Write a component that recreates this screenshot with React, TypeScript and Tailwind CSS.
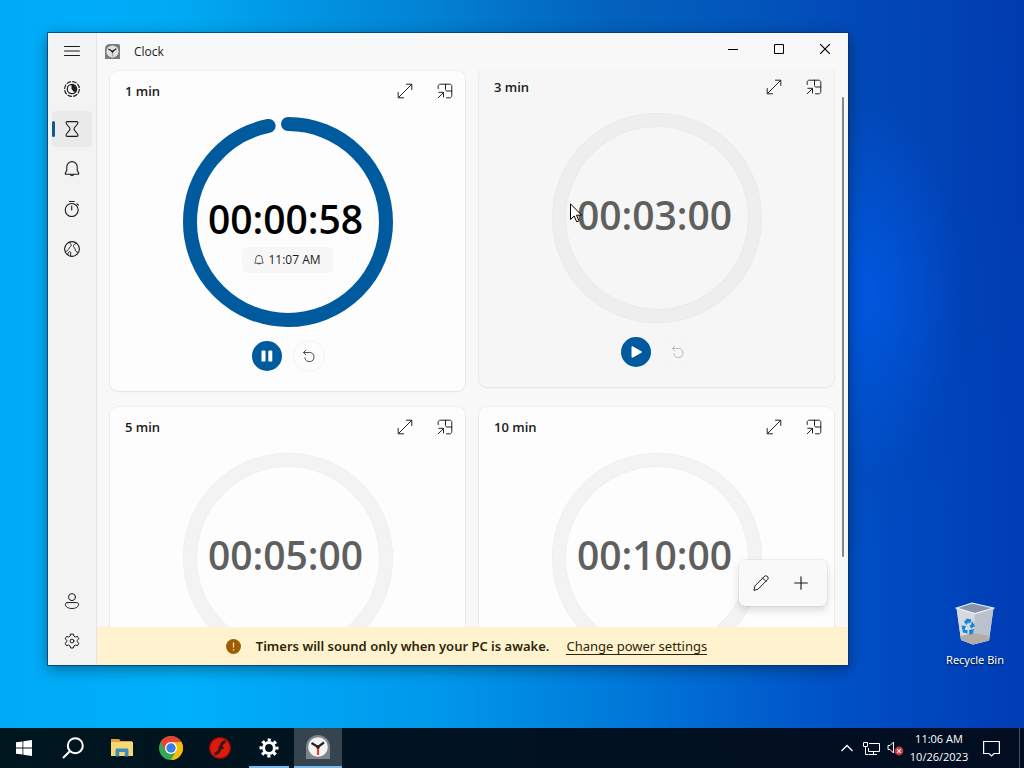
import React from 'react';

interface Timer {
  name: string;
  time: string;
  // fraction of the ring that is still filled, 0 when the timer is idle
  progress: number;
  endsAt?: string;
  hovered?: boolean;
}

const timers: Timer[] = [
  { name: '1 min', time: '00:00:58', progress: 58 / 60, endsAt: '11:07 AM' },
  { name: '3 min', time: '00:03:00', progress: 0, hovered: true },
  { name: '5 min', time: '00:05:00', progress: 0 },
  { name: '10 min', time: '00:10:00', progress: 0 },
];

const RADIUS = 98;
const CIRCUMFERENCE = 2 * Math.PI * RADIUS;

interface IconProps {
  size?: number;
  className?: string;
  children: React.ReactNode;
}

const Icon: React.FC<IconProps> = ({ size = 16, className = '', children }) => (
  <svg
    width={size}
    height={size}
    viewBox="0 0 16 16"
    fill="none"
    stroke="currentColor"
    strokeWidth="1"
    strokeLinecap="round"
    strokeLinejoin="round"
    className={className}
    aria-hidden="true"
  >
    {children}
  </svg>
);

const MenuIcon = () => (
  <Icon>
    <path d="M.5 3.5h15M.5 8h15M.5 12.5h15" />
  </Icon>
);

const FocusIcon = () => (
  <Icon>
    <circle cx="8" cy="8" r="7.4" strokeDasharray="4.6 1.2" strokeWidth="1.2" strokeLinecap="butt" />
    <circle cx="8" cy="8" r="4.7" strokeWidth="1.2" />
    <path d="M8 4v4l2.500 3.100A4 4 0 0 0 8 4z" fill="currentColor" />
  </Icon>
);

const HourglassIcon = () => (
  <Icon>
    <path
      d="M3.2.6h9.600c.8 0 1.200.4 1.100 1.200-.3 3-3.900 3.700-3.900 6.200s3.600 3.200 3.900 6.200c.1.800-.3 1.200-1.100 1.200H3.200c-.8 0-1.200-.4-1.100-1.200C2.400 11.200 6 10.500 6 8S2.400 4.800 2.100 1.800C2 1 2.400.600 3.200.600z"
      strokeWidth="1.1"
    />
  </Icon>
);

const BellIcon = ({ size = 16 }: { size?: number }) => (
  <Icon size={size}>
    <path
      d="M8 .6a5.2 5.2 0 0 0-5.2 5.100v3.500L1.300 12.300c-.2.500 0 .9.500.9h12.400c.5 0 .7-.4.5-.9l-1.500-3.100V5.700A5.200 5.200 0 0 0 8 .6zM6.300 13.400a1.750 1.750 0 0 0 3.400 0"
      strokeWidth="1.1"
    />
  </Icon>
);

const StopwatchIcon = () => (
  <Icon>
    <circle cx="7.700" cy="9" r="6.500" strokeWidth="1.1" />
    <path d="M5.500.5h4.600M7.700 5v4M13 2.800l1.400 1.400" strokeWidth="1.1" />
  </Icon>
);

const WorldIcon = () => (
  <Icon>
    <circle cx="8" cy="8" r="7.400" strokeWidth="1.1" />
    <path d="M5.600 1.300c-.3 1.500 1.900 1.600 1.800 2.900-.1 1.200-1.700 1.300-1.900 2.500-.2 1.300-1.200 1.600-1.900 2.400-.5.700-1.100 1.300-2 1.500M12.200 2.300c-.8.900-2.400.9-2.700 2.200-.3 1.300.5 1.800 1.200 2.700.7.900.3 2.200 1.200 3.200.6.700 1.400.9 2 .9M3.700 13.700c.2-1.200.5-2.500 1.700-2.900 1.300-.4 1.500 1 1.300 2.300l-.2 1.900" />
  </Icon>
);

const PersonIcon = () => (
  <Icon>
    <circle cx="8" cy="4.100" r="3.500" />
    <path d="M3.200 9.600h9.600c1 0 1.800.7 1.800 1.600 0 2.600-2.700 4.300-6.600 4.300s-6.600-1.700-6.600-4.300c0-.9.800-1.600 1.800-1.600z" />
  </Icon>
);

const SettingsIcon = () => (
  <Icon>
    <circle cx="8" cy="8" r="1.900" />
    <path d="M6.600 1.100h2.800l.5 2 1.500.9 2-.6 1.400 2.400-1.500 1.500v1.500l1.500 1.500-1.400 2.400-2-.6-1.500.9-.5 2H6.600l-.5-2-1.500-.9-2 .6-1.400-2.400 1.500-1.500V7.300L1.200 5.800l1.400-2.400 2 .6 1.500-.9z" />
  </Icon>
);

const ExpandIcon = () => (
  <Icon>
    <path d="M1.500 14.500l13-13M9.500 1.200h5.300v5.300M1.200 9.500v5.300h5.300" />
  </Icon>
);

const CompactIcon = () => (
  <Icon>
    <path d="M1.200 5.500V3.200c0-1.100.9-2 2-2h9.600c1.100 0 2 .9 2 2v9.600c0 1.100-.9 2-2 2H9.500M8.500 1.200v5.300c0 .9.600 1.500 1.500 1.500h4.800M1.200 14.800l5-5M1.800 9.300h4.700V14" />
  </Icon>
);

const ResetIcon = () => (
  <Icon size={14}>
    <path d="M4.300 1.500L1.700 4l2.600 2.600M1.900 4h6.600a5.200 5.200 0 1 1-5.200 6" />
  </Icon>
);

const ClockLogo = ({ size, muted }: { size: number; muted?: boolean }) => (
  <svg width={size} height={size} viewBox="0 0 24 24" aria-hidden="true">
    <path
      d={muted ? 'M7 0h14a3 3 0 0 1 3 3v21H0V8A8 8 0 0 1 7 0z' : 'M12 0a12 12 0 0 1 12 12v12H0V12A12 12 0 0 1 12 0z'}
      fill={muted ? '#7a7a7a' : '#7d858b'}
    />
    <circle cx="12" cy="12" r="9.800" fill={muted ? '#e2e2e2' : '#f3f3f3'} />
    <path d="M12 12v8" stroke={muted ? '#a5a5a5' : '#e0442a'} strokeWidth="2.200" />
    <path d="M5.500 8l6.500 4 6-4.500" stroke="#222" strokeWidth="2.200" fill="none" />
    <circle cx="12" cy="12" r="1.800" fill="#222" />
  </svg>
);

const NavButton: React.FC<{ label: string; active?: boolean; children: React.ReactNode }> = ({
  label,
  active,
  children,
}) => (
  <button
    type="button"
    aria-label={label}
    className={`flex h-9 w-10 items-center justify-center rounded ${
      active ? 'relative bg-[#eaeaea]' : ''
    }`}
  >
    {active && <span className="absolute left-0 h-4 w-[3px] rounded-full bg-[#0a5a9c]" />}
    {children}
  </button>
);

const Sidebar = () => (
  <nav className="flex w-[49px] shrink-0 flex-col items-center justify-between border-r border-[#e4e4e4] bg-[#f3f3f3] pb-1.5">
    <div className="flex flex-col gap-0.5">
      <NavButton label="Open navigation">
        <MenuIcon />
      </NavButton>
      <div className="flex flex-col gap-1">
        <NavButton label="Focus sessions">
          <FocusIcon />
        </NavButton>
        <NavButton label="Timer" active>
          <HourglassIcon />
        </NavButton>
        <NavButton label="Alarm">
          <BellIcon />
        </NavButton>
        <NavButton label="Stopwatch">
          <StopwatchIcon />
        </NavButton>
        <NavButton label="World clock">
          <WorldIcon />
        </NavButton>
      </div>
    </div>
    <div className="flex flex-col gap-1">
      <NavButton label="Sign in">
        <PersonIcon />
      </NavButton>
      <NavButton label="Settings">
        <SettingsIcon />
      </NavButton>
    </div>
  </nav>
);

const TitleBar = () => (
  <header className="flex h-[37px] shrink-0 items-start justify-between">
    <div className="flex h-full items-center gap-3.5 pl-2">
      <ClockLogo size={15} muted />
      <h1 className="text-xs">Clock</h1>
    </div>
    <div className="flex">
      <button type="button" aria-label="Minimize" className="flex h-8 w-[46px] items-center justify-center">
        <svg width="10" height="10" viewBox="0 0 10 10" stroke="#000">
          <path d="M0 5.500h10" />
        </svg>
      </button>
      <button type="button" aria-label="Maximize" className="flex h-8 w-[46px] items-center justify-center">
        <svg width="10" height="10" viewBox="0 0 10 10" stroke="#000" fill="none">
          <path d="M.5.500h9v9h-9z" />
        </svg>
      </button>
      <button type="button" aria-label="Close" className="flex h-8 w-[46px] items-center justify-center">
        <svg width="10" height="10" viewBox="0 0 10 10" stroke="#000" strokeWidth="1.200">
          <path d="M0 0l10 10M10 0L0 10" />
        </svg>
      </button>
    </div>
  </header>
);

const Cursor = () => (
  <svg width="12" height="20" viewBox="0 0 12 20" className="absolute top-[90px] left-[18px]" aria-hidden="true">
    <path d="M.5.800v15.700l3.700-3.500 2.500 5.800 2.300-1-2.500-5.600h5z" fill="#fff" stroke="#000" />
  </svg>
);

const TimerCard: React.FC<{ timer: Timer }> = ({ timer }) => {
  const running = timer.progress > 0;

  return (
    <article
      className={`flex flex-col items-center rounded-lg pb-5 shadow-[0_0_0_1px_rgba(0,0,0,0.04),0_1px_2px_rgba(0,0,0,0.05)] ${
        timer.hovered ? '-translate-y-1 bg-[#f6f6f6]' : 'bg-[#fdfdfd]'
      }`}
    >
      <div className="flex h-10 w-full items-center justify-between pl-[15px]">
        <h2 className="text-[13px] leading-5 font-semibold">{timer.name}</h2>
        <div className="flex text-[#222]">
          <button type="button" aria-label={`Expand ${timer.name}`} className="flex size-10 items-center justify-center">
            <ExpandIcon />
          </button>
          <button type="button" aria-label={`Keep ${timer.name} on top`} className="flex size-10 items-center justify-center">
            <CompactIcon />
          </button>
        </div>
      </div>

      <div className="relative mt-1.5 size-[210px]">
        <svg width="210" height="210" viewBox="0 0 210 210" fill="none" strokeWidth="14" aria-hidden="true">
          {running ? (
            <circle
              cx="105"
              cy="105"
              r={RADIUS}
              stroke="#005a9e"
              strokeLinecap="round"
              strokeDasharray={`${CIRCUMFERENCE * timer.progress} ${CIRCUMFERENCE}`}
              transform="rotate(-90 105 105)"
            />
          ) : (
            <>
              <circle cx="105" cy="105" r={RADIUS} stroke={timer.hovered ? '#e6e6e6' : '#ebebeb'} />
              <circle cx="105" cy="105" r={RADIUS} stroke={timer.hovered ? '#eeeeee' : '#f3f3f3'} strokeWidth="13" />
            </>
          )}
        </svg>
        <div className="absolute inset-0 grid grid-rows-[1fr_auto_1fr] justify-items-center pr-1 pb-1.5">
          <span
            className={`row-start-2 text-[39px] leading-10 font-semibold ${
              running ? 'text-black' : 'text-[#5f5f5f]'
            }`}
          >
            {timer.time}
          </span>
          {timer.endsAt && (
            <span className="row-start-3 mt-2 ml-1 flex h-[26px] items-center gap-1 self-start rounded-md bg-[#f7f7f7] px-3 text-xs">
              <BellIcon size={10} />
              {timer.endsAt}
            </span>
          )}
        </div>
        {timer.hovered && <Cursor />}
      </div>

      <div className="mt-3.5 flex gap-3">
        <button
          type="button"
          aria-label={running ? 'Pause' : 'Start'}
          className="flex size-[30px] items-center justify-center rounded-full bg-[#005a9e]"
        >
          <svg width="14" height="14" viewBox="0 0 14 14" fill="#fff" aria-hidden="true">
            {running ? (
              <path d="M1.500 2.300c0-.6.300-.9.900-.9h2.200c.600 0 .9.300.9.900v9.400c0 .6-.3.900-.9.900H2.400c-.6 0-.9-.3-.9-.9zM8.300 2.300c0-.6.300-.9.900-.9h2.200c.6 0 .9.300.9.900v9.400c0 .6-.3.900-.9.900H9.200c-.6 0-.9-.3-.9-.9z" />
            ) : (
              <path d="M2.500 2.400c0-.9.700-1.300 1.500-.9l8.300 4.700c.7.400.7 1.200 0 1.600L4 12.500c-.8.400-1.500 0-1.500-.9z" />
            )}
          </svg>
        </button>
        <button
          type="button"
          aria-label="Reset"
          disabled={!running}
          className={`flex size-[30px] items-center justify-center rounded-full ${
            running ? 'text-[#333] shadow-[0_0_2px_rgba(0,0,0,0.12)]' : 'text-[#b0b0b0] shadow-[0_0_2px_rgba(0,0,0,0.04)]'
          }`}
        >
          <ResetIcon />
        </button>
      </div>
    </article>
  );
};

const PowerWarning = () => (
  <div className="flex h-[38px] shrink-0 items-center justify-center bg-[#fff3cf] pr-3 font-['Noto_Sans',sans-serif] text-[#2e2508]">
    <svg width="15" height="15" viewBox="0 0 15 15" className="mr-[15px]" aria-hidden="true">
      <circle cx="7.500" cy="7.500" r="7.500" fill="#9d5d00" />
      <path d="M7.500 3.500v5M7.500 10.300v1.200" stroke="#fff3cf" strokeWidth="1.200" />
    </svg>
    <p className="text-[13px] leading-5 font-semibold">Timers will sound only when your PC is awake.</p>
    <a href="#power" className="ml-[17px] border-b border-current text-[13px] leading-4">
      Change power settings
    </a>
  </div>
);

const ClockWindow = () => (
  <section className="flex min-w-0 flex-1 overflow-hidden bg-[#f8f8f8] text-[#1b1b1b] shadow-[0_0_0_1px_rgba(10,50,90,0.7),0_4px_14px_rgba(0,0,0,0.4)]">
    <Sidebar />
    <div className="flex min-h-0 min-w-0 flex-1 flex-col">
      <TitleBar />
      <main className="relative flex min-h-0 flex-1 flex-col">
        <div className="grid min-h-0 flex-1 grid-cols-2 content-start gap-x-3.5 gap-y-4 overflow-hidden pt-px pr-3.5 pl-[13px]">
          {timers.map((timer) => (
            <TimerCard key={timer.name} timer={timer} />
          ))}
        </div>
        <div className="absolute top-[27px] right-1 bottom-[70px] w-0.5 rounded-full bg-[#868686]" />
        <div className="absolute right-[21px] bottom-[21px] flex h-[46px] items-center rounded-md bg-[#f9f9f9] pr-1.5 pl-0.5 shadow-[0_0_0_1px_rgba(0,0,0,0.04),0_4px_8px_rgba(0,0,0,0.14)]">
          <button type="button" aria-label="Edit timers" className="flex size-10 items-center justify-center">
            <Icon>
              <path d="M1 15l1-4.200L11.300 1.500a2.200 2.200 0 0 1 3.200 3.200L5.200 14zM9.700 3.100l3.200 3.200" />
            </Icon>
          </button>
          <button type="button" aria-label="Add new timer" className="flex size-10 items-center justify-center">
            <Icon size={14}>
              <path d="M8 .8v14.400M.8 8h14.400" strokeWidth="1.300" />
            </Icon>
          </button>
        </div>
      </main>
      <PowerWarning />
    </div>
  </section>
);

const RecycleBin = () => (
  <button type="button" className="flex w-[98px] flex-col items-center gap-1 text-white">
    <svg width="40" height="44" viewBox="0 0 40 44" aria-hidden="true">
      <path d="M1.500 6L20 11.500 38.500 6 34 38.500 18 42.500 6 38z" fill="#c9ced6" />
      <path d="M1.500 6L20 11.500 18 42.500 6 38z" fill="#d5dae1" />
      <path d="M20 11.500L38.500 6 34 38.500 18 42.500z" fill="#bcc2cd" />
      <path d="M6 34l12-3 16.500 3-.5 4.500-16 4L6 38z" fill="#b3aca8" />
      <path d="M1.500 6L17 1l21.500 5L20 11.500z" fill="#8794ac" stroke="#eef2f7" strokeWidth="1.200" />
      <path d="M9 20l3-3.500 4.500 1-1.500 4-2-1-1.500 2.500zM17 19l3 5-4 2.500-1.500-3 1.500-.5zM6.500 23.500l4.500.5-1.500 4h3v3.500l-4.500-1zM14 28l5-1-1 4.500-3.500 1.500z" fill="#1286d8" />
    </svg>
    <span className="font-['Noto_Sans',sans-serif] text-[11px] leading-5 [text-shadow:0_1px_2px_rgba(0,0,0,0.9)]">
      Recycle Bin
    </span>
  </button>
);

const TaskButton: React.FC<{ label: string; open?: boolean; focused?: boolean; children: React.ReactNode }> = ({
  label,
  open,
  focused,
  children,
}) => (
  <button
    type="button"
    aria-label={label}
    className={`flex h-10 w-12 items-center justify-center ${focused ? 'border-b-2 border-[#76b9ed] bg-[#35444f]' : ''} ${
      open ? 'bg-[linear-gradient(#76b9ed,#76b9ed)] bg-[length:40px_2px] bg-bottom bg-no-repeat' : ''
    }`}
  >
    {children}
  </button>
);

const Taskbar = () => (
  <footer className="flex h-10 shrink-0 items-center justify-between bg-gradient-to-r from-[#00161f] to-[#020d22] text-white">
    <div className="flex gap-px">
      <TaskButton label="Start">
        <svg width="16" height="16" viewBox="0 0 16 16" fill="#fff" aria-hidden="true">
          <path d="M0 2.300l6.500-.9v6.200H0zM7.300 1.300L16 0v7.600H7.300zM0 8.400h6.500v6.200L0 13.700zM7.300 8.400H16V16l-8.700-1.300z" />
        </svg>
      </TaskButton>
      <TaskButton label="Search">
        <svg width="22" height="22" viewBox="0 0 22 22" fill="none" stroke="#fff" strokeWidth="2" aria-hidden="true">
          <circle cx="13.300" cy="8.700" r="7.500" />
          <path d="M7.800 14.200L1 21" />
        </svg>
      </TaskButton>
      <TaskButton label="File Explorer">
        <svg width="22" height="20" viewBox="0 0 22 20" aria-hidden="true">
          <path d="M0 1h8l1.500 2H21v4H0z" fill="#dda43a" />
          <path d="M0 4h22v14H0z" fill="#f8d775" />
          <path d="M4.500 18.500v-6.300c0-1 .5-1.700 1.500-1.700h10c1 0 1.500.7 1.500 1.700v6.300h-3.700V14H8.200v4.500z" fill="#3c8cc0" />
        </svg>
      </TaskButton>
      <TaskButton label="Google Chrome">
        <svg width="24" height="24" viewBox="0 0 24 24" aria-hidden="true">
          <circle cx="12" cy="12" r="12" fill="#34a853" />
          <path d="M12 12L1.600 6A12 12 0 0 1 22.400 6z" fill="#ea4335" />
          <path d="M1.600 6l5.300 9 5.100-3V6z" fill="#ea4335" />
          <path d="M12 6h10.400A12 12 0 0 1 12 24l5.200-9z" fill="#fbbc05" />
          <circle cx="12" cy="12" r="6" fill="#fff" />
          <circle cx="12" cy="12" r="4.700" fill="#3b7de9" />
        </svg>
      </TaskButton>
      <TaskButton label="Flash Player">
        <svg width="22" height="22" viewBox="0 0 22 22" fill="none" aria-hidden="true">
          <circle cx="11" cy="11" r="11" fill="#8f0d06" />
          <circle cx="11" cy="11" r="9.800" fill="#dc1b0e" />
          <path d="M16.500 4.500c-5 .5-4.500 6-6.500 9.500-1 1.900-2.300 2.700-4.500 3M9.500 10.800h5" stroke="#3a1512" strokeWidth="2.800" />
        </svg>
      </TaskButton>
      <TaskButton label="Settings" open>
        <svg width="20" height="20" viewBox="0 0 20 20" fill="none" stroke="#fff" aria-hidden="true">
          <circle cx="10" cy="10" r="5.400" strokeWidth="3" />
          <circle cx="10" cy="10" r="8" strokeWidth="3" strokeDasharray="3.140 3.143" strokeDashoffset="1.570" />
        </svg>
      </TaskButton>
      <TaskButton label="Clock" focused>
        <ClockLogo size={24} />
      </TaskButton>
    </div>

    <div className="flex h-full items-center">
      <button type="button" aria-label="Show hidden icons" className="flex h-10 w-6 items-center justify-center">
        <svg width="12" height="8" viewBox="0 0 12 8" fill="none" stroke="#fff" strokeWidth="1.300">
          <path d="M.500 7L6 1.500 11.500 7" />
        </svg>
      </button>
      <button type="button" aria-label="Network" className="flex h-10 w-6 items-center justify-center">
        <svg width="17" height="15" viewBox="0 0 17 15" fill="none" stroke="#fff">
          <path d="M6 2.500h10.500v8h-11V7M6 13.500h8M10.500 10.500v3M.5 1.500h4v4h-4zM2.500 5.500v8h3" />
        </svg>
      </button>
      <button type="button" aria-label="Volume" className="flex h-10 w-6 items-center justify-center">
        <svg width="17" height="16" viewBox="0 0 17 16" fill="none" stroke="#fff">
          <path d="M1 5.500h2L6.500 2v11L3 9.500H1z" />
          <circle cx="12" cy="11" r="4.400" fill="#d3343a" stroke="none" />
          <path d="M10.200 9.200l3.600 3.600M13.800 9.200l-3.600 3.600" strokeWidth="1.200" />
        </svg>
      </button>
      <button type="button" className="w-16 text-center text-[11px] leading-[18px]">
        <span className="block">11:06 AM</span>
        <span className="block">10/26/2023</span>
      </button>
      <button type="button" aria-label="Notifications" className="flex h-10 w-10 items-center justify-center">
        <svg width="17" height="17" viewBox="0 0 17 17" fill="none" stroke="#fff" strokeWidth="1.200">
          <path d="M.6 1.500h15.800v12H11L8.500 16 6 13.500H.6z" />
        </svg>
      </button>
      <span className="ml-2 mr-1 h-full w-px bg-[#44506a]" />
    </div>
  </footer>
);

const App: React.FC = () => {
  return (
    <div className="flex h-screen flex-col overflow-hidden bg-[radial-gradient(ellipse_9%_24%_at_85%_38%,rgba(0,100,255,0.5),transparent),radial-gradient(ellipse_at_60%_0%,rgba(10,50,130,0.35),transparent_60%),linear-gradient(to_right,#00aaf8_0%,#00b0fa_18%,#0098ea_43%,#0076d8_62%,#0050c6_82%,#003cb4_100%)] font-['Open_Sans','Noto_Sans',sans-serif]">
      <div className="flex min-h-0 flex-1">
        <div className="flex min-w-0 flex-1 pt-[33px] pb-[63px] pl-12">
          <ClockWindow />
        </div>
        <aside className="flex w-44 shrink-0 items-end justify-end pb-[58px]">
          <RecycleBin />
        </aside>
      </div>
      <Taskbar />
    </div>
  );
};

export default App;
